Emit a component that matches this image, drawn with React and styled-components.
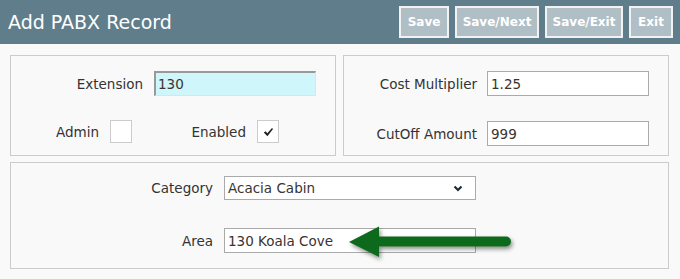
import React from 'react';
import styled, { createGlobalStyle } from 'styled-components';

const GlobalStyle = createGlobalStyle`
  html, body {
    margin: 0;
    padding: 0;
    background: #f9f9f9;
  }
  body {
    font-family: "DejaVu Sans", Verdana, sans-serif;
    color: #333;
  }
`;

/*** header ***/
const Header = styled.div`
  height: 44px;
  background: #607d8b;
  display: flex;
  align-items: center;
  justify-content: space-between;
  padding: 0 7px 0 8px;
`;

const Title = styled.h1`
  margin: 0;
  font-size: 19px;
  font-weight: normal;
  color: #ffffff;
`;

const Buttons = styled.div`
  display: flex;
  gap: 6px;
`;

const HeadButton = styled.button`
  height: 32px;
  width: ${p => p.w}px;
  padding: 0;
  border: 2px solid #f2f2f2;
  background: #b0bec5;
  color: #ffffff;
  font-family: "DejaVu Sans", Verdana, sans-serif;
  font-weight: bold;
  font-size: 12px;
`;

/*** body ***/
const Page = styled.div`
  padding: 11px 11px 0 10px;
  display: flex;
  flex-direction: column;
  gap: 6px;
`;

const TopRow = styled.div`
  display: flex;
  gap: 7px;
`;

const Panel = styled.div`
  flex: 1;
  border: 1px solid #cccccc;
  background: #f9f9f9;
  padding: ${p => p.pad};
  display: flex;
  flex-direction: column;
  gap: ${p => p.gap}px;
`;

const Row = styled.div`
  display: flex;
  align-items: center;
  position: relative;
`;

const Label = styled.label`
  width: ${p => p.w}px;
  margin-right: ${p => p.mr || 11}px;
  text-align: right;
  font-size: 13.5px;
  color: #333;
  white-space: nowrap;
`;

const Input = styled.div`
  box-sizing: border-box;
  width: ${p => p.w}px;
  height: 25px;
  border: 1px solid #aaaaaa;
  background: #ffffff;
  display: flex;
  align-items: center;
  padding-left: 3px;
  font-size: 13.5px;
  color: #3a3330;
`;

const FocusInput = styled(Input)`
  background: #cff6fb;
  border-top: 2px solid #999999;
  border-left: 2px solid #999999;
  border-right: 1px solid #e2e2e2;
  border-bottom: 1px solid #e2e2e2;
  padding-left: 2px;
`;

const Select = styled(Input)`
  height: 24px;
  justify-content: space-between;
  padding-right: 12px;
`;

const Check = styled.div`
  box-sizing: border-box;
  width: 22px;
  height: 23px;
  border: 1px solid #cccccc;
  background: #ffffff;
  display: flex;
  align-items: center;
  justify-content: center;
`;

const Arrow = styled.svg`
  position: absolute;
  left: 334px;
  top: -6px;
  overflow: visible;
`;

const Chevron = () => (
  <svg width="10" height="7" viewBox="0 0 10 7">
    <path d="M1.5 1.5 L5 5 L8.5 1.5" fill="none" stroke="#1f2a3a" strokeWidth="2.2" />
  </svg>
);

const Tick = () => (
  <svg width="11" height="10" viewBox="0 0 11 10">
    <path d="M0.8 5.6 L2.6 4.2 L4.3 6.2 L9 1 L10 2 L4.4 9.2 Z" fill="#222" />
  </svg>
);

const App = () => {
  return (
    <>
      <GlobalStyle />
      <Header>
        <Title>Add PABX Record</Title>
        <Buttons>
          <HeadButton w={50}>Save</HeadButton>
          <HeadButton w={84}>Save/Next</HeadButton>
          <HeadButton w={78}>Save/Exit</HeadButton>
          <HeadButton w={44}>Exit</HeadButton>
        </Buttons>
      </Header>

      <Page>
        <TopRow>
          <Panel pad="15px 0 12px 0" gap={24}>
            <Row>
              <Label w={132}>Extension</Label>
              <FocusInput w={162}>130</FocusInput>
            </Row>
            <Row>
              <Label w={88}>Admin</Label>
              <Check />
              <Label w={114}>Enabled</Label>
              <Check><Tick /></Check>
            </Row>
          </Panel>
          <Panel pad="15px 0 9px 0" gap={25}>
            <Row>
              <Label w={133} mr={10}>Cost Multiplier</Label>
              <Input w={162}>1.25</Input>
            </Row>
            <Row>
              <Label w={133} mr={10}>CutOff Amount</Label>
              <Input w={162}>999</Input>
            </Row>
          </Panel>
        </TopRow>

        <Panel pad="13px 0 15px 0" gap={28}>
          <Row>
            <Label w={202}>Category</Label>
            <Select w={252}>Acacia Cabin<Chevron /></Select>
          </Row>
          <Row>
            <Label w={202}>Area</Label>
            <Input w={252}>130 Koala Cove</Input>
            <Arrow width="172" height="42" viewBox="0 0 172 42">
              <defs>
                <filter id="sh" x="-20%" y="-40%" width="140%" height="180%">
                  <feDropShadow dx="1.5" dy="2.5" stdDeviation="2" floodColor="#000" floodOpacity="0.45" />
                </filter>
              </defs>
              <path
                d="M4 20 L34 4.5 L34 14.5 L161 14.5 A5 5 0 0 1 161 24.5 L34 24.5 L34 35 Z"
                fill="#0f6b1b"
                filter="url(#sh)"
              />
            </Arrow>
          </Row>
        </Panel>
      </Page>
    </>
  );
};

export default App;
